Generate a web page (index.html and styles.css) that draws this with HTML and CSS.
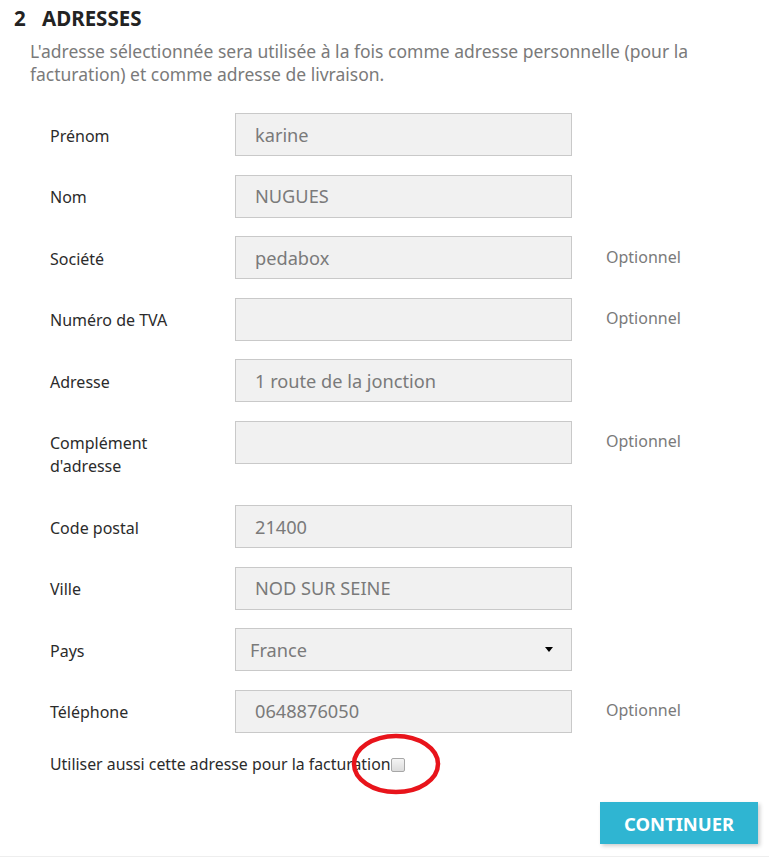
FILE: index.html
```html
<!DOCTYPE html>
<html lang="fr">
<head>
  <meta charset="UTF-8" />
  <meta name="viewport" content="width=device-width, initial-scale=1.0"/>
  <title>Adresses</title>
  <link rel="stylesheet" href="styles.css">
</head>
<body>

  <section class="checkout-step">
    <h1 class="step-title"><span class="step-number">2</span>Adresses</h1>

    <p class="step-intro">L'adresse sélectionnée sera utilisée à la fois comme adresse personnelle (pour la facturation) et comme adresse de livraison.</p>

    <form class="address-form">
      <div class="form-row">
        <label>Prénom</label>
        <input type="text" value="karine" />
        <span class="comment"></span>
      </div>

      <div class="form-row">
        <label>Nom</label>
        <input type="text" value="NUGUES" />
        <span class="comment"></span>
      </div>

      <div class="form-row">
        <label>Société</label>
        <input type="text" value="pedabox" />
        <span class="comment">Optionnel</span>
      </div>

      <div class="form-row">
        <label>Numéro de TVA</label>
        <input type="text" value="" />
        <span class="comment">Optionnel</span>
      </div>

      <div class="form-row">
        <label>Adresse</label>
        <input type="text" value="1 route de la jonction" />
        <span class="comment"></span>
      </div>

      <div class="form-row">
        <label>Complément<br>d'adresse</label>
        <input type="text" value="" />
        <span class="comment">Optionnel</span>
      </div>

      <div class="form-row">
        <label>Code postal</label>
        <input type="text" value="21400" />
        <span class="comment"></span>
      </div>

      <div class="form-row">
        <label>Ville</label>
        <input type="text" value="NOD SUR SEINE" />
        <span class="comment"></span>
      </div>

      <div class="form-row">
        <label>Pays</label>
        <div class="select-box">
          <span>France</span>
          <span class="caret"></span>
        </div>
        <span class="comment"></span>
      </div>

      <div class="form-row">
        <label>Téléphone</label>
        <input type="text" value="0648876050" />
        <span class="comment">Optionnel</span>
      </div>

      <div class="use-same">
        Utiliser aussi cette adresse pour la facturation<span class="check-wrap"><input type="checkbox" class="check" />
          <!-- annotation autour de la case -->
          <svg class="mark" viewBox="0 0 94 64">
            <ellipse cx="47" cy="32" rx="42" ry="28"></ellipse>
          </svg>
        </span>
      </div>

      <div class="actions">
        <button type="button" class="continue-btn">Continuer</button>
      </div>
    </form>
  </section>

</body>
</html>
```

FILE: styles.css
```css
body {
  margin: 0;
  font-family: "Noto Sans", Arial, sans-serif;
  background-color: #fff;
  color: #232323;
}

.checkout-step {
  padding: 6px 11px 0 14px;
  border-bottom: 1px solid #eeeeee;
  height: 857px;
  box-sizing: border-box;
}

.step-title {
  margin: 0;
  font-size: 20.5px;
  font-weight: bold;
  text-transform: uppercase;
  line-height: 24px;
  color: #232323;
}

.step-number {
  display: inline-block;
  width: 28px;
}

.step-intro {
  margin: 10px 0 0 16px;
  font-size: 17.5px;
  line-height: 23px;
  color: #7a7a7a;
  max-width: 670px;
}

.address-form {
  margin-top: 27px;
  padding-left: 36px;
}

.form-row {
  display: grid;
  grid-template-columns: 185px 337px auto;
  margin-bottom: 18.5px;
}

.form-row label {
  font-size: 16px;
  line-height: 23px;
  padding: 11.5px 0 8.5px;
  color: #2b2b2b;
}

.form-row input,
.select-box {
  height: 43px;
  box-sizing: border-box;
  border: 1px solid #c9c9c9;
  background-color: #f1f1f1;
  font-family: inherit;
  font-size: 18.2px;
  color: #7a7a7a;
  padding: 0 19px;
  margin: 0;
}

.select-box {
  display: flex;
  align-items: center;
  justify-content: space-between;
  padding: 0 18px 0 14px;
}

.caret {
  width: 0;
  height: 0;
  border-left: 4px solid transparent;
  border-right: 4px solid transparent;
  border-top: 5px solid #000;
}

.comment {
  font-size: 16px;
  line-height: 23px;
  color: #7a7a7a;
  padding: 9.5px 0 0 34px;
}

.use-same {
  font-size: 15.85px;
  line-height: 23px;
  padding-top: 1.5px;
  color: #2b2b2b;
}

.check-wrap {
  position: relative;
  display: inline-block;
  vertical-align: -2px;
}

.check {
  appearance: none;
  -webkit-appearance: none;
  display: block;
  width: 14px;
  height: 14px;
  margin: 0;
  border: 1px solid #a7a7a7;
  border-radius: 2px;
  background: linear-gradient(#f4f4f4, #dcdcdc);
}

.mark {
  position: absolute;
  left: -42px;
  top: -26px;
  width: 94px;
  height: 64px;
  overflow: visible;
}

.mark ellipse {
  fill: none;
  stroke: #e8141b;
  stroke-width: 4.5;
}

.actions {
  display: flex;
  justify-content: flex-end;
  margin-top: 26.5px;
}

.continue-btn {
  background-color: #2fb5d2;
  color: #fff;
  border: none;
  height: 42px;
  padding: 0 24px;
  font-family: inherit;
  font-size: 18.4px;
  font-weight: bold;
  text-transform: uppercase;
  box-shadow: 2px 2px 4px rgba(0, 0, 0, 0.2);
  cursor: pointer;
}
```
